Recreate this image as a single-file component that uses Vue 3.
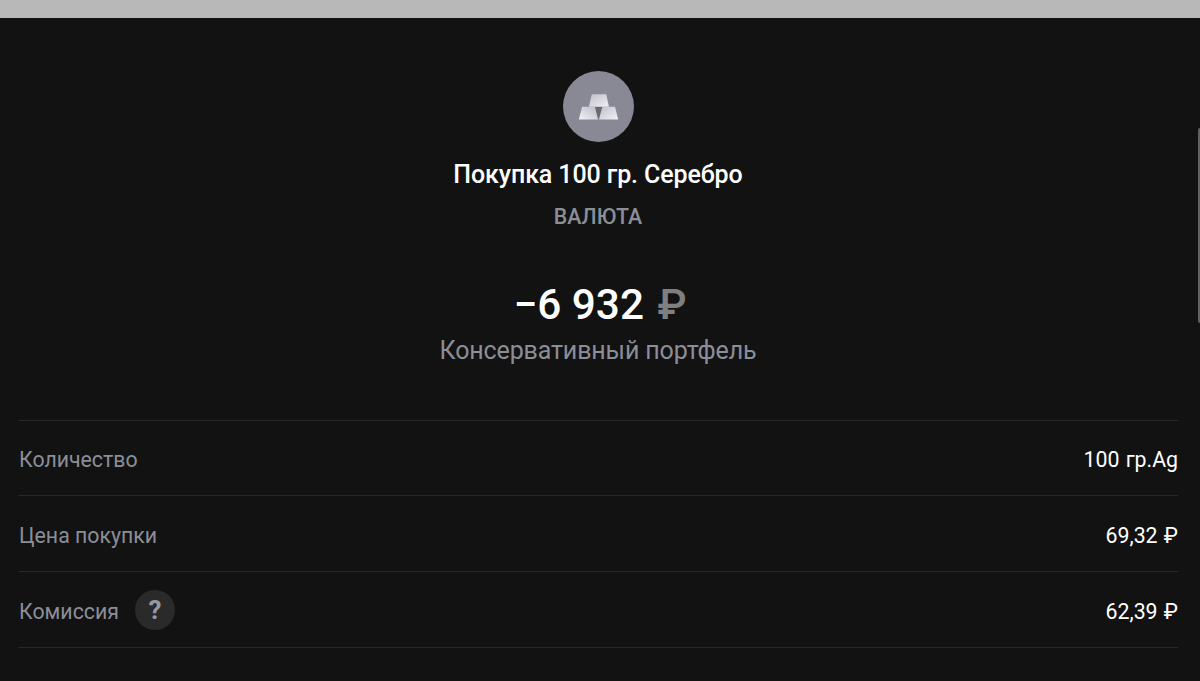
<template>
  <div class="screen">
    <div class="top-strip"></div>

    <div class="operation">
      <svg class="logo" viewBox="0 0 70 70">
        <defs>
          <linearGradient id="ingot" x1="0" y1="0" x2="1" y2="1">
            <stop offset="0" stop-color="#c0bfca" />
            <stop offset="1" stop-color="#f0f0f4" />
          </linearGradient>
          <linearGradient id="ingotLeft" x1="0" y1="1" x2="1" y2="0">
            <stop offset="0" stop-color="#f0f0f4" />
            <stop offset="1" stop-color="#bcbbc6" />
          </linearGradient>
        </defs>
        <circle cx="35" cy="35" r="35" fill="#898895" />
        <path d="M31 35.2h8.2l-3 12h-2.2z" fill="#696874" />
        <path d="M28.4 23h14.2l2.7 12.3H25.5z" fill="url(#ingot)" />
        <path d="M18.8 35.3h12.6l3.2 12.4h-19z" fill="url(#ingotLeft)" />
        <path d="M38.8 35.3h12.5l3.1 12.4h-19z" fill="url(#ingot)" />
      </svg>
      <div class="title">Покупка 100 гр. Серебро</div>
      <div class="category">ВАЛЮТА</div>
      <div class="amount">−6 932 <span class="currency">₽</span></div>
      <div class="portfolio">Консервативный портфель</div>
    </div>

    <div class="details">
      <div v-for="row in rows" :key="row.label" class="row">
        <span class="label">{{ row.label }}</span>
        <button v-if="row.hint" class="hint">?</button>
        <span class="value">{{ row.value }}</span>
      </div>
    </div>

    <div class="scrollbar"></div>
  </div>
</template>

<script setup>
import { ref } from 'vue'

const rows = ref([
  { label: 'Количество', value: '100 гр.Ag' },
  { label: 'Цена покупки', value: '69,32 ₽' },
  { label: 'Комиссия', value: '62,39 ₽', hint: true }
])
</script>

<style>
body {
  margin: 0;
  background: #121212;
}
</style>

<style scoped>
.screen {
  position: relative;
  height: 681px;
  overflow: hidden;
  background: #121212;
  color: #fff;
  font-family: Roboto, sans-serif;
}
.top-strip {
  height: 18px;
  background: #b8b8b9;
}
.operation {
  display: flex;
  flex-direction: column;
  align-items: center;
  height: 401.5px;
  padding-right: 4px;
  box-sizing: border-box;
}
.logo {
  width: 71px;
  height: 71px;
  margin-top: 53px;
}
.title {
  margin-top: 18px;
  font-size: 25px;
  line-height: 30px;
  font-weight: 500;
  letter-spacing: -0.1px;
}
.category {
  margin-top: 14px;
  font-size: 21.3px;
  line-height: 26px;
  font-weight: 500;
  color: #8b8e97;
}
.amount {
  margin-top: 50px;
  margin-right: -4px;
  font-size: 42.3px;
  line-height: 50px;
  font-weight: 500;
  white-space: pre;
}
.currency {
  margin-left: 3px;
  color: #7f7f7f;
}
.portfolio {
  margin-top: 6px;
  font-size: 25px;
  line-height: 30px;
  letter-spacing: -0.13px;
  color: #8b8e97;
}
.details {
  margin: 0 22px 0 19px;
  border-top: 1px solid #282828;
}
.row {
  display: flex;
  align-items: center;
  height: 75.8px;
  box-sizing: border-box;
  padding-top: 4px;
  border-bottom: 1px solid #282828;
  font-size: 21.3px;
}
.label {
  color: #8b8e97;
}
.hint {
  width: 40px;
  height: 40px;
  margin: -3px 0 0 16px;
  padding: 0;
  border: none;
  border-radius: 50%;
  background: #2a2a2b;
  color: #9699a3;
  font-family: inherit;
  font-size: 26px;
  font-weight: 700;
}
.value {
  margin-left: auto;
  word-spacing: 1px;
}
.scrollbar {
  position: absolute;
  top: 128px;
  right: 0;
  width: 2px;
  height: 195px;
  border-radius: 2px 0 0 2px;
  background: #616161;
}
</style>
